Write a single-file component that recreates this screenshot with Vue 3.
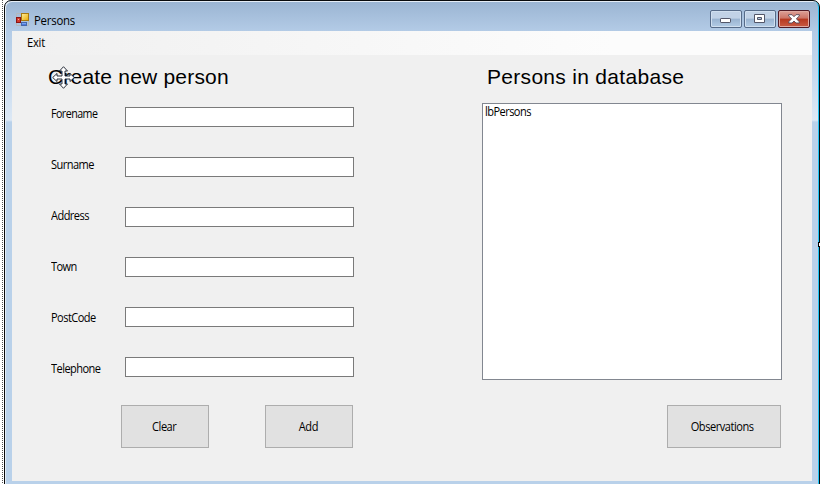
<script setup>
const labels = ['Forename', 'Surname', 'Address', 'Town', 'PostCode', 'Telephone']
</script>

<template>
  <div class="designer">
    <div class="window">
      <header class="titlebar">
        <svg class="app-icon" width="14" height="14" viewBox="0 0 14 14">
          <defs>
            <linearGradient id="gold" x2="1" y2="1"><stop stop-color="#fff0a0" /><stop offset="1" stop-color="#e9a900" /></linearGradient>
            <linearGradient id="blue" x2="0" y2="1"><stop stop-color="#a8c8ff" /><stop offset="1" stop-color="#2458d0" /></linearGradient>
          </defs>
          <path d="M.5 4.500V.5H5.500M.5 9.500V12.500H5M11 12.500H12.500V8" fill="none" stroke="#b4b8bc" />
          <rect x="5.500" y=".5" width="7" height="7" fill="url(#gold)" stroke="#a87a10" />
          <rect x=".5" y="4.500" width="4" height="5" fill="#d43a2c" stroke="#8c1414" />
          <rect x="2" y="6" width="1" height="1" fill="#f6aaa0" />
          <rect x="5.500" y="9.500" width="5" height="3" fill="url(#blue)" stroke="#4668ac" />
        </svg>
        <span class="title">Persons</span>
        <div class="controls">
          <button class="control" aria-label="Minimize">
            <svg width="12" height="10" viewBox="0 0 12 10"><rect x=".5" y="4.500" width="10" height="4" rx=".6" fill="#fff" stroke="#525668" /></svg>
          </button>
          <button class="control" aria-label="Maximize">
            <svg width="12" height="10" viewBox="0 0 12 10"><path fill-rule="evenodd" d="M.5.5H10.500V8.500H.5zM3.500 3.500V5.500H7.500V3.500z" fill="#fff" stroke="#525668" /></svg>
          </button>
          <button class="control close" aria-label="Close">
            <svg width="12" height="10" viewBox="0 0 12 10"><path d="M.7.7H4L6 2.700 8 .7H11.300V2L8.300 4.800 11.300 7.700V9H8L6 7 4 9H.7V7.700L3.700 4.800.7 2z" fill="#fff" stroke="#564858" stroke-width=".9" /></svg>
          </button>
        </div>
      </header>
      <div class="client">
        <nav class="menu"><span>Exit</span></nav>
        <main class="form">
          <section class="create">
            <h2 class="create-heading">Create new person
              <svg class="move" width="23" height="23" viewBox="0 0 23 23">
                <path d="M11.500.7 15.500 5H13V10H18V7.500L22.300 11.500 18 15.500V13H13V18H15.500L11.500 22.300 7.500 18H10V13H5V15.500L.7 11.500 5 7.500V10H10V5H7.500z" fill="#fff" stroke="#151b28" stroke-width=".9" />
              </svg>
            </h2>
            <div class="fields">
              <div class="labels"><label v-for="(label, i) in labels" :key="label" :for="'field' + i">{{ label }}</label></div>
              <div class="inputs"><input v-for="(label, i) in labels" :id="'field' + i" :key="label" type="text" /></div>
            </div>
            <div class="actions"><button><span>Clear</span></button><button><span>Add</span></button></div>
          </section>
          <section class="database">
            <h2>Persons in database</h2>
            <div class="listbox"><span>lbPersons</span></div>
            <button class="observations"><span>Observations</span></button>
          </section>
        </main>
      </div>
    </div>
    <i class="handle"></i>
  </div>
</template>

<style>
body { background: #fff; overflow: hidden; }
</style>

<style scoped>
* { box-sizing: border-box; }
.designer {
  position: relative;
  width: 820px;
  height: 484px;
  padding-left: 4px;
  background: repeating-linear-gradient(#555 0 1px, #fff 1px 2px) 2px 0 / 1px 100% no-repeat, #fff;
  font: 12px/14px "Open Sans", "Noto Sans", sans-serif;
  letter-spacing: -.6px;
  color: #000;
}
.window {
  width: 816px;
  height: 490px;
  padding: 0 6px 0 7px;
  border: 1px solid #080a0c;
  border-radius: 7px 7px 0 0;
  background: linear-gradient(#9ab4d2 0, #b3cbe6 30px, #c6daef 75px, #dce8f5 119px, #b9d1ea 121px);
  box-shadow: inset 1px 1px #e5edf6, inset -1px 0 #20c5f5;
}
.titlebar { display: flex; height: 30px; padding: 9px 3px 0 4px; }
.app-icon { flex: none; margin-top: 3px; }
.title { margin: 4px 0 0 4px; letter-spacing: -.25px; transform: scaleX(.95); transform-origin: left; }
.controls { display: flex; gap: 2px; margin-left: auto; }
.control {
  display: flex;
  align-items: center;
  justify-content: center;
  width: 32px;
  height: 18px;
  padding: 0 0 1px;
  border: 1px solid #566b88;
  border-radius: 2px;
  background: linear-gradient(#c1d2e6 0 45%, #99b3d0 50%, #b3cce5);
  box-shadow: inset 0 0 0 1px #d0dfef;
}
.close {
  border-color: #501a25;
  background: linear-gradient(#dda097 0, #cc7466 45%, #b63820 50%, #c95b43);
  box-shadow: inset 0 0 0 1px #dfaaa2;
}
.client { width: 800px; height: 450px; background: #f0f0f0; }
.menu { height: 24px; padding: 5px 15px; background: linear-gradient(90deg, #f0f0f0, #fcfcfc 75%); letter-spacing: -.25px; }
.menu span { display: inline-block; transform: scaleX(.93); transform-origin: left; }
.form { display: flex; justify-content: space-between; padding: 10px 30px 0 36px; }
.create { width: 306px; }
.database { display: flex; flex-direction: column; width: 300px; }
h2 {
  position: relative;
  height: 38px;
  margin: 0;
  font: 21px/24px "Liberation Sans", Arial, sans-serif;
  letter-spacing: .3px;
  color: #000;
  white-space: nowrap;
}
.create-heading { letter-spacing: .2px; }
.database h2 { padding-left: 5px; }
.move { position: absolute; left: 4px; top: 1px; }
.fields { display: flex; }
.labels { display: grid; grid-auto-rows: 51px; width: 77px; padding: 4px 0 0 3px; }
.labels label { justify-self: start; transform: scaleX(.92); transform-origin: left; }
.labels label:first-child { transform: scaleX(.89); }
.inputs { display: flex; flex-direction: column; gap: 30px; padding-top: 4px; }
input { width: 229px; height: 20px; padding: 0 3px; border: 1px solid #7a7a7a; background: #fff; }
.actions { display: flex; gap: 56px; margin: -8px 0 0 73px; }
.actions button, .observations {
  width: 88px;
  height: 43px;
  padding: 0 2px 0 0;
  border: 1px solid #adadad;
  background: #e1e1e1;
  color: #000;
  font: inherit;
  letter-spacing: -.5px;
}
button span, .listbox span { display: inline-block; transform: scaleX(.92); }
.listbox span { transform-origin: left; }
.listbox { height: 277px; padding: 1px 2px; border: 1px solid #828790; background: #fff; }
.database .observations { align-self: flex-end; width: 114px; margin: 25px 1px 0 0; padding-right: 4px; }
.handle { position: absolute; right: 0; top: 242px; width: 2px; height: 5px; border: 1px solid #000; border-right: 0; background: #fff; }
</style>
